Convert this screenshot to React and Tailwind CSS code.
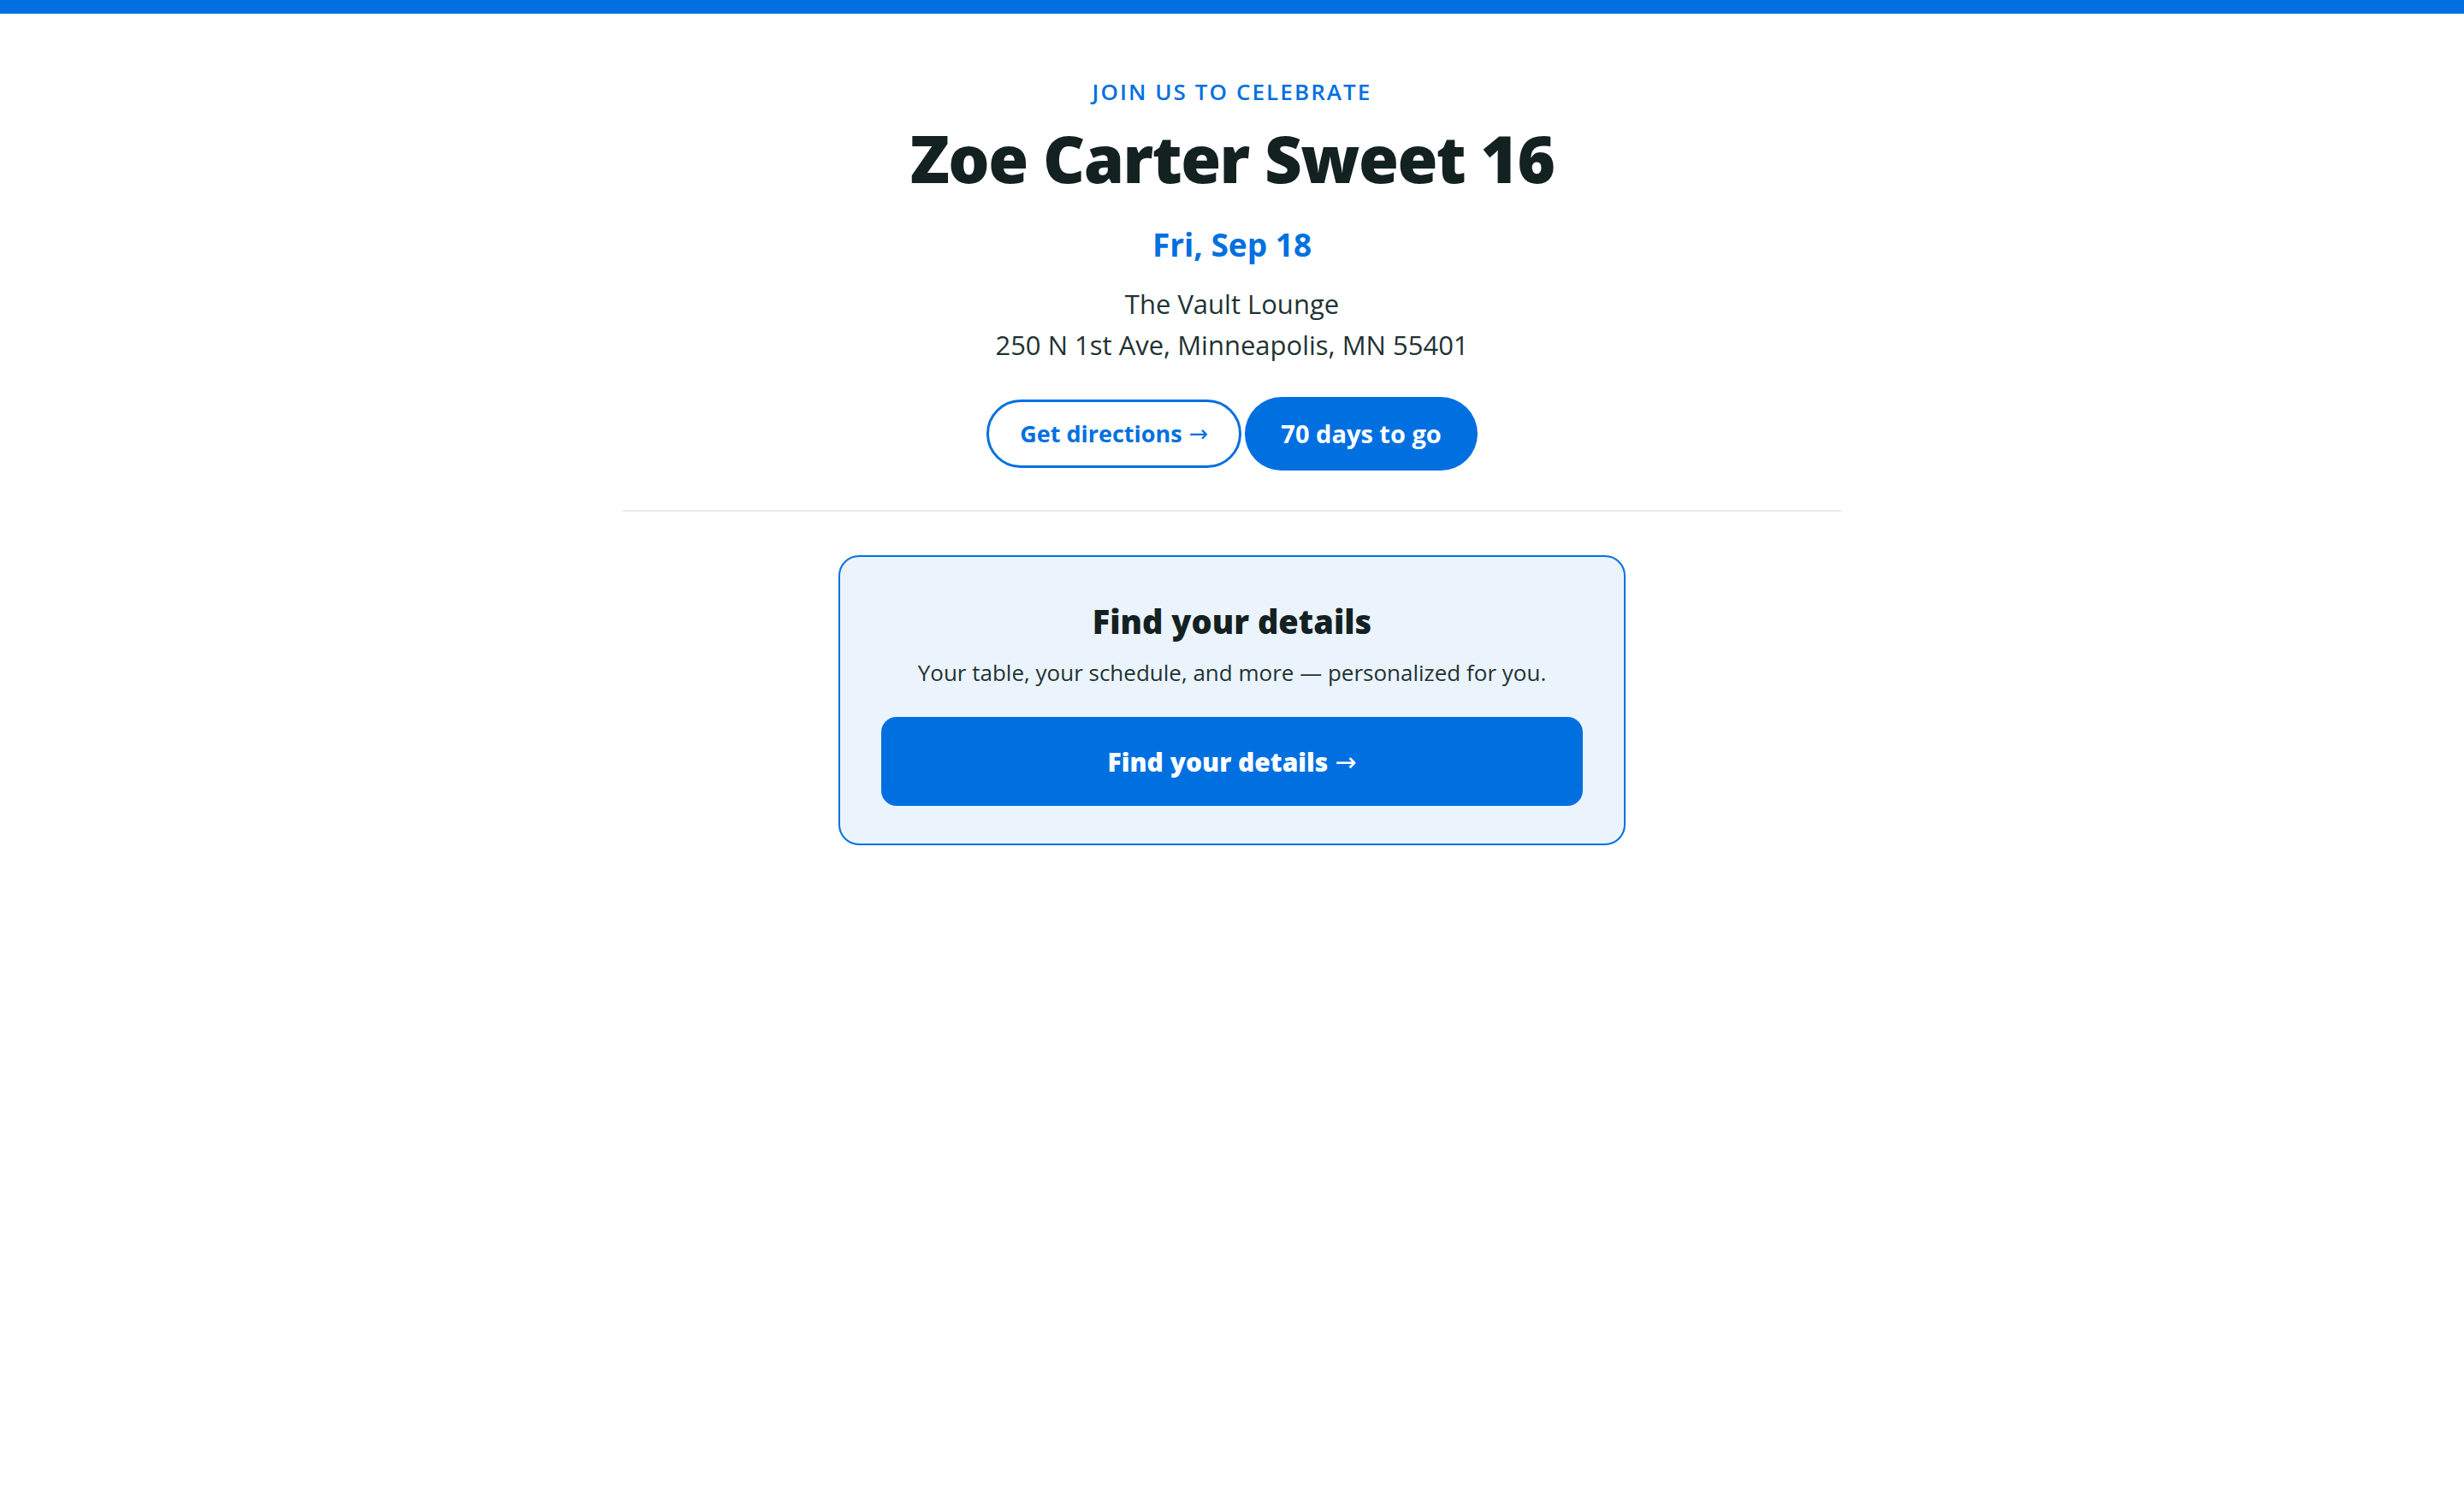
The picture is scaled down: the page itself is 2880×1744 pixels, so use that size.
function Arrow() {
  // the text font has no arrow glyph, so a fixed fallback face keeps it consistent
  return <span className="font-['DejaVu_Sans',sans-serif] font-normal">→</span>;
}

export default function App() {
  return (
    <div className="min-h-screen bg-white font-['Open_Sans',sans-serif] text-[#1f3333]">
      <div className="h-[16px] bg-[#0070e0]" />

      <header className="mx-auto flex w-[1424px] flex-col items-center text-center">
        <p className="mt-[73px] text-[26px] font-semibold leading-[36px] tracking-[0.08em] text-[#0070e0]">
          JOIN US TO CELEBRATE
        </p>
        <h1 className="mt-[12px] text-[76px] font-extrabold leading-[96px] tracking-[-0.02em] text-[#142121]">
          Zoe Carter Sweet 16
        </h1>
        <p className="mt-[29px] text-[37px] font-bold leading-[48px] text-[#0070e0]">Fri, Sep 18</p>
        <div className="mt-[21px] text-[31px] leading-[48px]">
          <p>The Vault Lounge</p>
          <p>250 N 1st Ave, Minneapolis, MN 55401</p>
        </div>
        <div className="mt-[37px] flex items-center gap-[4px]">
          <a
            href="#"
            className="flex h-[80px] items-center gap-[8px] rounded-full border-[3px] border-[#0070e0] px-[36px] text-[27px] font-bold text-[#0070e0]"
          >
            Get directions <Arrow />
          </a>
          <span className="flex h-[86px] items-center rounded-full bg-[#0070e0] px-[42px] text-[29px] font-bold text-white">
            70 days to go
          </span>
        </div>
        <div className="mt-[46px] h-[2px] w-full bg-[#e8eaec]" />
      </header>

      <main className="mx-auto mt-[51px] flex w-[920px] flex-col items-center rounded-[24px] border-2 border-[#0070e0] bg-[#ebf4fd] px-[48px] pb-[44px] pt-[49px] text-center">
        <h2 className="text-[38px] font-extrabold leading-[52px] text-[#142121]">Find your details</h2>
        <p className="mt-[14px] text-[26px] leading-[40px] text-[#1f3333]">
          Your table, your schedule, and more — personalized for you.
        </p>
        <button className="mt-[32px] flex h-[104px] w-full items-center justify-center gap-[8px] rounded-[18px] bg-[#0070e0] text-[30px] font-extrabold text-white">
          Find your details <Arrow />
        </button>
      </main>
    </div>
  );
}
